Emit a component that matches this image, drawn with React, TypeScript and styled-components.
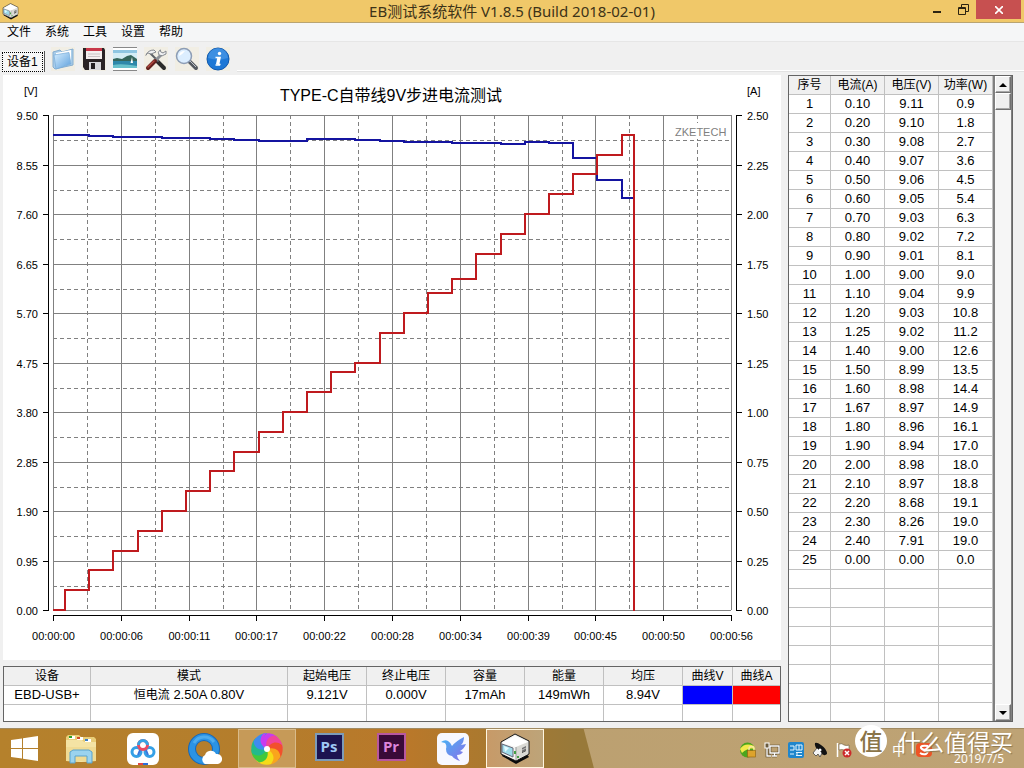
import React from 'react';
import styled, { createGlobalStyle, css } from 'styled-components';

const GlobalStyle = createGlobalStyle`
  *, *::before, *::after { box-sizing: border-box; }
  body {
    margin: 0;
    background: #f0f0f0;
    color: #000;
    font-family: "Liberation Sans", "Noto Sans CJK SC", sans-serif;
    font-size: 12px;
  }
  button { font: inherit; color: inherit; padding: 0; border: 0; background: none; }
`;

/* ---------- window frame ---------- */

const Window = styled.div`
  display: flex;
  flex-direction: column;
  min-height: 100vh;
`;

const TitleBar = styled.header`
  display: grid;
  grid-template-columns: 1fr auto 1fr;
  height: 23px;
  background: #f0c869;
  border-bottom: 1px solid #b9a471;
`;

const AppIcon = styled.span`
  padding: 3px 0 0 2px;
  line-height: 0;
`;

const WindowTitle = styled.h1`
  margin: 0;
  font: 400 15px/22px "Noto Sans", "Noto Sans CJK SC", sans-serif;
  color: #3d3318;
`;

const WindowControls = styled.div`
  display: flex;
  justify-content: flex-end;
  padding-right: 3px;
`;

const WindowButton = styled.button<{ $close?: boolean }>`
  display: flex;
  align-items: center;
  justify-content: center;
  width: ${(p) => (p.$close ? 45 : 26)}px;
  height: 19px;
  background: ${(p) => (p.$close ? '#c75050' : 'transparent')};
`;

const MenuBar = styled.nav`
  display: flex;
  gap: 14px;
  height: 19px;
  padding-left: 7px;
  background: #f5f6f7;
  border-bottom: 1px solid #e6e6e6;
`;

const MenuItem = styled.button`
  line-height: 18px;
`;

const Toolbar = styled.div`
  display: flex;
  align-items: flex-end;
  height: 33px;
  padding: 0 0 3px 2px;
`;

const DeviceTab = styled.button`
  height: 21px;
  padding: 0 1px 0 0;
  border-right: 1px solid #555;
  background: #f7f7f7;
`;

const TabFocus = styled.span`
  display: block;
  padding: 0 4px;
  border: 1px dotted #000;
  line-height: 18px;
  white-space: nowrap;
`;

const ToolGroup = styled.div`
  display: flex;
  gap: 7px;
  padding: 0 7px 1px 6px;
`;

const ToolButton = styled.button`
  width: 24px;
  height: 24px;
  line-height: 0;
  background: #f1eee4;
`;

const ToolbarEdge = styled.div`
  flex: 1;
  height: 2px;
  border-top: 1px solid #fff;
  border-bottom: 1px solid #e2e2e2;
`;

const Workspace = styled.main`
  display: grid;
  grid-template-columns: minmax(0, 1fr) 225px;
  gap: 7px;
  flex: 1;
  padding: 0 11px 6px 3px;
`;

const LeftColumn = styled.div`
  display: flex;
  flex-direction: column;
  gap: 6px;
`;

/* ---------- chart ---------- */

const ChartPanel = styled.section`
  background: #fff;
  line-height: 0;
`;

const ChartSvg = styled.svg`
  width: 100%;
  height: auto;
  font-family: "Liberation Sans", "Noto Sans CJK SC", sans-serif;
  font-size: 11px;
`;

const PLOT = { x: 50, y: 40, w: 678, h: 495 };
const V_MAX = 9.5;
const A_MAX = 2.5;
const STEP = 24.2;

const TIMES = ['00', '06', '11', '17', '22', '28', '34', '39', '45', '50', '56'].map((s) => `00:00:${s}`);

type Sample = [string, string, string];
const SAMPLES: Sample[] = [
  ['0.10', '9.11', '0.9'], ['0.20', '9.10', '1.8'], ['0.30', '9.08', '2.7'], ['0.40', '9.07', '3.6'],
  ['0.50', '9.06', '4.5'], ['0.60', '9.05', '5.4'], ['0.70', '9.03', '6.3'], ['0.80', '9.02', '7.2'],
  ['0.90', '9.01', '8.1'], ['1.00', '9.00', '9.0'], ['1.10', '9.04', '9.9'], ['1.20', '9.03', '10.8'],
  ['1.25', '9.02', '11.2'], ['1.40', '9.00', '12.6'], ['1.50', '8.99', '13.5'], ['1.60', '8.98', '14.4'],
  ['1.67', '8.97', '14.9'], ['1.80', '8.96', '16.1'], ['1.90', '8.94', '17.0'], ['2.00', '8.98', '18.0'],
  ['2.10', '8.97', '18.8'], ['2.20', '8.68', '19.1'], ['2.30', '8.26', '19.0'], ['2.40', '7.91', '19.0'],
  ['0.00', '0.00', '0.0'],
];
const EMPTY_ROWS = 8;

const yFor = (value: number, max: number) => Math.round(PLOT.y + PLOT.h * (1 - value / max));
const gx = (i: number) => Math.round(PLOT.x + (PLOT.w / 10) * i) + 0.5;
const gy = (i: number) => Math.round(PLOT.y + (PLOT.h / 10) * i) + 0.5;

function stepPath(start: number, values: number[], max: number) {
  let d = `M${PLOT.x} ${yFor(start, max)}`;
  values.forEach((v, i) => {
    d += `H${Math.round(PLOT.x + 12 + STEP * i)}V${yFor(v, max)}`;
  });
  return d + `H${PLOT.x + 581}`;
}

function Chart() {
  const steps = SAMPLES.slice(0, 24);
  const idx = Array.from({ length: 11 }, (_, i) => i);
  const right = PLOT.x + PLOT.w;
  const bottom = PLOT.y + PLOT.h;
  return (
    <ChartSvg viewBox="0 0 778 585" role="img" aria-label="TYPE-C自带线9V步进电流测试">
      <g stroke="#808080" fill="none">
        {idx.map((i) => (
          <path key={i} d={`M${gx(i)} ${PLOT.y}V${bottom}M${PLOT.x} ${gy(i)}H${right}`} />
        ))}
        {idx.slice(0, 10).map((i) => (
          <path
            key={i}
            strokeDasharray="4 3"
            d={`M${gx(i) + 34} ${PLOT.y}V${bottom}M${PLOT.x} ${gy(i) + 25}H${right}`}
          />
        ))}
      </g>
      <g stroke="#000" fill="none">
        <path d={`M45.5 ${PLOT.y}V${bottom + 1}M733.5 ${PLOT.y}V${bottom + 1}M50 540.5H729`} />
        {idx.map((i) => (
          <path key={i} d={`M40 ${gy(i)}H45M734 ${gy(i)}H739M${gx(i)} 541V546`} />
        ))}
      </g>
      <rect x="669" y="48" width="56" height="16" fill="#fff" />
      <text x="672" y="61" fill="#808080">ZKETECH</text>
      <text x="388" y="26" fontSize="16" textAnchor="middle">TYPE-C自带线9V步进电流测试</text>
      <text x="21" y="20">[V]</text>
      <text x="744" y="20">[A]</text>
      {idx.map((i) => (
        <g key={i}>
          <text x="35" y={gy(i) + 4} textAnchor="end">{(V_MAX - 0.95 * i).toFixed(2)}</text>
          <text x="744" y={gy(i) + 4}>{(A_MAX - 0.25 * i).toFixed(2)}</text>
          <text x={gx(i)} y="565" textAnchor="middle">{TIMES[i]}</text>
        </g>
      ))}
      <path d={stepPath(9.121, steps.map((s) => +s[1]), V_MAX)} fill="none" stroke="#1414a0" strokeWidth="2" />
      <path d={`${stepPath(0, steps.map((s) => +s[0]), A_MAX)}V${bottom + 1}`} fill="none" stroke="#bf1a1e" strokeWidth="2" />
    </ChartSvg>
  );
}

/* ---------- tables ---------- */

const frame = css`
  border: 1px solid #646464;
  background: #fff;
`;

const GridTable = styled.table`
  width: 100%;
  table-layout: fixed;
  border-spacing: 0;
  text-align: center;
  font-size: 13px;
`;

const Col = styled.col<{ $w: number }>`
  width: ${(p) => p.$w}px;
`;

const cell = css`
  height: 19px;
  padding: 0;
  border-right: 1px solid #c0c0c0;
  border-bottom: 1px solid #c0c0c0;
  line-height: 18px;
  white-space: nowrap;
  overflow: hidden;
`;

const HeadCell = styled.th`
  ${cell}
  background: #f0f0f0;
  font-size: 12px;
  font-weight: 400;
`;

const Cell = styled.td<{ $fill?: string }>`
  ${cell}
  background: ${(p) => p.$fill ?? '#fff'};
`;

const CjkText = styled.span`
  font-size: 12px;
`;

const SummaryPanel = styled.section`
  ${frame}
  height: 56px;
  overflow: hidden;

  th:last-child, td:last-child { border-right: 0; }
  tr:last-child td { border-bottom: 0; height: 16px; }
`;

const DataPanel = styled.section`
  ${frame}
  display: grid;
  grid-template-columns: 1fr 19px;
  align-items: stretch;

  tr:last-child td { border-bottom: 0; height: 18px; }
`;

const ScrollBar = styled.div`
  display: flex;
  flex-direction: column;
  border-left: 2px solid #808080;
  border-right: 1px solid #808080;
  background: #f6f6f6;
`;

const bevel = css`
  border: 1px solid;
  border-color: #fff #707070 #707070 #fff;
  box-shadow: inset -1px -1px 0 #a8a8a8;
  background: #f0f0f0;
`;

const ScrollButton = styled.button`
  ${bevel}
  display: flex;
  align-items: center;
  justify-content: center;
  height: 17px;
`;

const ScrollThumb = styled.div`
  ${bevel}
  height: 17px;
  margin-bottom: auto;
`;

const SUMMARY: { title: string; width: number; value?: React.ReactNode; fill?: string }[] = [
  { title: '设备', width: 87, value: 'EBD-USB+' },
  { title: '模式', width: 197, value: <><CjkText>恒电流</CjkText> 2.50A 0.80V</> },
  { title: '起始电压', width: 79, value: '9.121V' },
  { title: '终止电压', width: 79, value: '0.000V' },
  { title: '容量', width: 79, value: '17mAh' },
  { title: '能量', width: 79, value: '149mWh' },
  { title: '均压', width: 79, value: '8.94V' },
  { title: '曲线V', width: 50, fill: '#0000ff' },
  { title: '曲线A', width: 47, fill: '#ff0000' },
];

function SummaryTable() {
  return (
    <SummaryPanel>
      <GridTable>
        <colgroup>{SUMMARY.map((c) => <Col key={c.title} $w={c.width} />)}</colgroup>
        <thead>
          <tr>{SUMMARY.map((c) => <HeadCell key={c.title} scope="col">{c.title}</HeadCell>)}</tr>
        </thead>
        <tbody>
          <tr>{SUMMARY.map((c) => <Cell key={c.title} $fill={c.fill}>{c.value}</Cell>)}</tr>
          <tr>{SUMMARY.map((c) => <Cell key={c.title} />)}</tr>
        </tbody>
      </GridTable>
    </SummaryPanel>
  );
}

function DataTable() {
  return (
    <DataPanel>
      <GridTable>
        <colgroup><Col $w={42} /><Col $w={54} /><Col $w={54} /><Col $w={54} /></colgroup>
        <thead>
          <tr>{['序号', '电流(A)', '电压(V)', '功率(W)'].map((h) => <HeadCell key={h} scope="col">{h}</HeadCell>)}</tr>
        </thead>
        <tbody>
          {SAMPLES.map((s, i) => (
            <tr key={i}>
              <Cell>{i + 1}</Cell>
              {s.map((v, j) => <Cell key={j}>{v}</Cell>)}
            </tr>
          ))}
          {Array.from({ length: EMPTY_ROWS }, (_, i) => (
            <tr key={i}><Cell /><Cell /><Cell /><Cell /></tr>
          ))}
        </tbody>
      </GridTable>
      <ScrollBar>
        <ScrollButton aria-label="向上">
          <svg width="8" height="4"><path d="M4 0L8 4H0Z" /></svg>
        </ScrollButton>
        <ScrollThumb />
        <ScrollButton aria-label="向下">
          <svg width="8" height="4"><path d="M4 4L8 0H0Z" /></svg>
        </ScrollButton>
      </ScrollBar>
    </DataPanel>
  );
}

/* ---------- taskbar ---------- */

const Taskbar = styled.footer`
  position: relative;
  display: flex;
  height: 40px;
  background: linear-gradient(to right, #b5812c 0%, #b47d2c 26%, #b9782a 40%, #a9792f 48%, #98793a 56%, #98793a 60%);
  border-top: 1px solid #a08a62;

  &::before {
    content: "";
    position: absolute;
    inset: 0;
    background: linear-gradient(to right, #b99d6b, #bea375);
    clip-path: polygon(57% 0, 100% 0, 100% 100%, 58% 100%);
  }
`;

const TaskList = styled.div`
  position: relative;
  display: flex;
  gap: 4px;
  margin-right: auto;
`;

const TaskButton = styled.button<{ $state?: 'open' | 'active' }>`
  display: flex;
  align-items: center;
  justify-content: center;
  width: 58px;
  height: 39px;
  border: 1px solid transparent;
  ${(p) => p.$state === 'open' && css`
    border-color: #d9bb8a;
    background: #c69a58;
  `}
  ${(p) => p.$state === 'active' && css`
    border-color: #fff6e0;
    background: linear-gradient(to right, #c79a68, #bda479);
  `}
`;

const StartButton = styled(TaskButton)`
  width: 48px;
`;

const AdobeTile = styled.span<{ $edge: string; $back: string; $ink: string }>`
  width: 29px;
  height: 28px;
  margin-bottom: 4px;
  border: 2px solid ${(p) => p.$edge};
  background: ${(p) => p.$back};
  color: ${(p) => p.$ink};
  font: 700 15px/23px "Open Sans", sans-serif;
`;

const Tray = styled.div`
  position: relative;
  display: flex;
  align-items: center;
  gap: 8px;
  padding: 3px 20px 0 0;
  color: #fff;
`;

const ImeMode = styled.span`
  width: 16px;
  margin-left: 32px;
  font-size: 14px;
  line-height: 16px;
`;

const TrayDate = styled.time`
  align-self: flex-end;
  margin-left: 14px;
  font: 12px/18px "Open Sans", sans-serif;
`;

const Watermark = styled.div`
  position: absolute;
  right: 11px;
  bottom: 11px;
  display: flex;
  align-items: center;
  gap: 11px;
  color: #fff;
  font: 23px/30px "Noto Sans CJK SC", sans-serif;
  white-space: nowrap;
  text-shadow: 1px 1px 1px #8d774f;
`;

const WatermarkBadge = styled.span`
  width: 32px;
  height: 32px;
  border-radius: 50%;
  background: #fff;
  color: #8a7448;
  font: 500 23px/30px "Noto Sans CJK SC", sans-serif;
  text-align: center;
  text-shadow: none;
`;

/* ---------- icons ---------- */

const CubeIcon = ({ size }: { size: number }) => (
  <svg width={size} height={size} viewBox="0 0 32 32">
    <path d="M3 23L17 31L30 24L27 20L5 19Z" fill="#0a0a0a" />
    <path d="M2 9L16 1L30 8V21L17 28L2 21Z" fill="#f4f4f0" stroke="#161616" strokeWidth="1" />
    <path d="M3 10L16 3L29 9L17 14Z" fill="#fff" />
    <path d="M17 14L29 9V21L17 27Z" fill="#d9d9d4" />
    <path d="M3 11L14 15V24L3 19Z" fill="#9fdcea" stroke="#667" />
    <path d="M5 13L10 15L6 19Z" fill="#e4fbff" />
    <path d="M17 14V27" stroke="#999" />
    <path d="M16 18v3M19 23v2" stroke="#44a044" strokeWidth="2" />
    <path d="M23 15l4-2v5l-4 2z" fill="#333" />
    <path d="M24 14v5M26 13v5M23 17l4-2" stroke="#ddd" strokeWidth=".7" />
  </svg>
);

const FolderIcon = () => (
  <svg width="24" height="24" viewBox="0 0 24 24">
    <defs><linearGradient id="fold" x1="0" y1="0" x2="1" y2="1"><stop offset="0" stopColor="#d8efff" /><stop offset="1" stopColor="#5c9fdc" /></linearGradient></defs>
    <path d="M2 5L9 3L11 5L22 2V18L4 22L2 20Z" fill="#a9cdea" stroke="#86aed0" />
    <path d="M5 6L20 3V17L5 21Z" fill="#fff" />
    <path d="M3 8L18 5.500L20 17L5 22Z" fill="url(#fold)" stroke="#78acd8" strokeWidth=".7" />
  </svg>
);

const FloppyIcon = () => (
  <svg width="24" height="24" viewBox="0 0 24 24">
    <path d="M1 1H22L23 3V23H3L1 20Z" fill="#292326" />
    <path d="M4 1H20V12H4Z" fill="#f4efef" />
    <path d="M4 1H20V4H4Z" fill="#c8384a" />
    <path d="M6 7H18M6 9.500H18" stroke="#c9c3c6" />
    <path d="M7 15H19V23H7Z" fill="#d9d9de" />
    <path d="M9 16H13V22H9Z" fill="#221e22" />
  </svg>
);

const PictureIcon = () => (
  <svg width="24" height="24" viewBox="0 0 24 24">
    <path d="M0 0H24V24H0Z" fill="#fff" />
    <path d="M0 3H24V14H0Z" fill="#d3edf6" />
    <path d="M0 3H24V6H0Z" fill="#8fc6e2" />
    <path d="M0 12L4 11L9 12L14 9L18 8L24 12V15H0Z" fill="#35665c" />
    <path d="M0 14H24V20H0Z" fill="#2e87aa" />
    <path d="M0 18Q8 16 24 19V21H0Z" fill="#68c0cb" />
    <path d="M19 10L17.500 16H20Z" fill="#fff" />
    <path d="M0 .5H24M0 23.500H24" stroke="#888" />
  </svg>
);

const ToolsIcon = () => (
  <svg width="24" height="24" viewBox="0 0 24 24" fill="none" strokeLinecap="round">
    <path d="M13 14L20 21" stroke="#2c2c2c" strokeWidth="4" />
    <path d="M6 6L14 14" stroke="#5c6066" strokeWidth="2" />
    <path d="M2 8Q4 3 10 3L12 5L7 7L4 6Z" fill="#f0f1f3" stroke="#85898f" />
    <path d="M18 7L12 13" stroke="#8c9096" strokeWidth="3" />
    <path d="M16 3Q13 5 15 8Q18 10 22 7V4L19 6L17 5Z" fill="#f0f1f3" stroke="#85898f" />
    <path d="M11 14L4 21" stroke="#63211e" strokeWidth="4" />
    <path d="M10 14L4 20" stroke="#b34841" strokeWidth="1.5" />
  </svg>
);

const MagnifierIcon = () => (
  <svg width="24" height="24" viewBox="0 0 24 24" fill="none">
    <path d="M14 14L21 21" stroke="#555a60" strokeWidth="4" strokeLinecap="round" />
    <path d="M14 13L21 20" stroke="#c0c4ca" strokeWidth="1" />
    <circle cx="9" cy="9" r="7.500" fill="#dceeff" stroke="#8d9db5" strokeWidth="1.500" />
    <path d="M4 9Q4 4 10 4Q7 8 4 9Z" fill="#fff" />
  </svg>
);

const InfoIcon = () => (
  <svg width="24" height="24" viewBox="0 0 24 24">
    <circle cx="12" cy="12" r="11" fill="#1e78d6" stroke="#1259ad" />
    <path d="M2 11A10 10 0 0 1 22 11Q12 14 2 11Z" fill="#5ba6ee" opacity=".5" />
    <circle cx="13.500" cy="6.500" r="1.700" fill="#fff" />
    <path d="M9.500 10.500H14L12.500 17.500H14.500M9.500 18H14" stroke="#fff" strokeWidth="1.600" fill="none" />
    <path d="M12.500 11L11.200 17.500" stroke="#fff" strokeWidth="2.500" />
  </svg>
);

const WindowsIcon = () => (
  <svg width="27" height="26" viewBox="0 0 27 26">
    <path d="M0 4L11 2.500V12H0ZM12 2.300L27 0V12H12ZM0 13H11V22.500L0 21ZM12 13H27V25L12 22.800Z" fill="#fff" />
  </svg>
);

const ExplorerIcon = () => (
  <svg width="32" height="30" viewBox="0 0 32 30">
    <path d="M1 3L3 1H14L16 3H29L31 5V27H1Z" fill="#e9cd78" />
    <path d="M4 2H10V5H4Z" fill="#fff" /><path d="M4 2H7V4H4Z" fill="#2ba02b" />
    <path d="M12 3H18V6H12Z" fill="#fff" /><path d="M12 3H15V5H12Z" fill="#d24b2a" />
    <path d="M20 5H26V8H20Z" fill="#fff" /><path d="M20 5H23V7H20Z" fill="#3b7fc4" />
    <path d="M1 6H17L19 8H31V27Q16 29 1 27Z" fill="#f4e3a4" />
    <path d="M1 13H31V27H1Z" fill="#ecd58a" opacity=".6" />
    <path d="M5 29V18L8 16H24L27 18V29H22V22H10V29Z" fill="#9bd3ee" stroke="#5aa3cc" />
  </svg>
);

const CloudRingsIcon = () => (
  <svg width="32" height="32" viewBox="0 0 32 32" fill="none">
    <rect width="32" height="32" rx="6" fill="#fff" />
    <circle cx="9.500" cy="19" r="4.500" stroke="#35a0e6" strokeWidth="3" />
    <circle cx="22.500" cy="19" r="4.500" stroke="#35a0e6" strokeWidth="3" />
    <path d="M13 17L11 22M19 17L21 22" stroke="#3a76dc" strokeWidth="2" />
    <circle cx="16" cy="12" r="4.500" stroke="#e94c62" strokeWidth="3" />
    <path d="M11.500 12A4.500 4.500 0 0 1 20.500 12" stroke="#36a4e4" strokeWidth="3" />
    <path d="M11 31H16" stroke="#e04646" strokeWidth="2" /><path d="M16 31H21" stroke="#2e6ed8" strokeWidth="2" />
  </svg>
);

const CloudBrowserIcon = () => (
  <svg width="34" height="32" viewBox="0 0 34 32">
    <circle cx="16" cy="16" r="12" fill="none" stroke="#1768b8" strokeWidth="8" />
    <circle cx="16" cy="16" r="12" fill="none" stroke="#2b93e4" strokeWidth="6" />
    <path d="M6 10A12 12 0 0 1 26 9" fill="none" stroke="#4dabec" strokeWidth="3" />
    <path d="M17 31A5 5 0 0 1 17 22A6 6 0 0 1 28 21A5 5 0 0 1 30 31Z" fill="#fff" />
  </svg>
);

const PETALS = ['#c73cf0', '#f0459a', '#f2502c', '#f9a51c', '#f5dc18', '#42c83c', '#23b98c', '#3e8bf0'];
const ColorWheelIcon = () => (
  <svg width="34" height="34" viewBox="-17 -17 34 34">
    {PETALS.map((c, i) => (
      <path key={c} d="M0 0C-6 -3 -9 -9 -4 -15C3 -17 9 -14 11 -11C4 -12 -1 -8 0 0Z" fill={c} transform={`rotate(${i * 45})`} />
    ))}
    <path d="M0 0C-6 -3 -9 -9 -4 -15L-1 -16C-5 -9 -3 -4 0 0Z" fill="#c73cf0" />
    <circle r="3" fill="#fff" />
  </svg>
);

const BirdIcon = () => (
  <svg width="32" height="32" viewBox="0 0 32 32">
    <defs><linearGradient id="bird" x1="0" y1="0" x2="1" y2="1"><stop offset="0" stopColor="#45b5f4" /><stop offset="1" stopColor="#8a6ee8" /></linearGradient></defs>
    <rect width="32" height="32" rx="5" fill="#f7f8ff" />
    <path d="M4 9Q8 6 11 8Q14 10 15 13Q19 8 27 4Q27 9 24 12L29 11Q27 16 23 18L26 19Q24 22 20 22Q20 25 23 28Q17 26 15 23Q9 22 9 16Q10 12 8 10Z" fill="url(#bird)" />
  </svg>
);

const LockIcon = () => (
  <svg width="16" height="16" viewBox="0 0 16 16">
    <circle cx="7.500" cy="8" r="7.500" fill="#4aa51e" />
    <path d="M0 7Q5 0 14 4L15 7Q8 5 2 11Z" fill="#f2ea4a" />
    <path d="M9 9V7A2.500 2.500 0 0 1 14 7V9" fill="none" stroke="#f7e7a0" strokeWidth="1.500" />
    <rect x="7.500" y="8.500" width="8" height="6.500" fill="#dda32c" stroke="#8a5f10" strokeWidth=".6" />
  </svg>
);

const NetworkIcon = () => (
  <svg width="16" height="16" viewBox="0 0 16 16" fill="none">
    <path d="M6 4H15V11H6ZM8 14H13M10.500 11V14M3 5V14H7" stroke="#4c3c20" strokeWidth="2.600" />
    <path d="M6 4H15V11H6ZM8 14H13M10.500 11V14M3 5V14H7" stroke="#fff" strokeWidth="1.400" />
    <rect x="1" y="1" width="4" height="5" fill="#6a5a3c" stroke="#fff" />
  </svg>
);

const BluePanelIcon = () => (
  <svg width="16" height="16" viewBox="0 0 16 16" fill="none">
    <rect width="16" height="16" rx="2" fill="#1f86cc" />
    <path d="M2 4H6V8H2M2 12H6M8 3H14V8H8ZM11 3V8M8 10.500H14M8 13.500H14M9 10V14" stroke="#e4f5ff" />
  </svg>
);

const SatelliteIcon = () => (
  <svg width="16" height="16" viewBox="0 0 16 16">
    <path d="M3 1Q2 4 7 10Q12 15 15 12Q15 7 9 3Q5 0 3 1Z" fill="#111" />
    <path d="M1 11L5 6L10 11L8 15L6 12L4 14Z" fill="#f4f4f4" stroke="#333" strokeWidth=".7" />
    <circle cx="8" cy="8" r="1.500" fill="#fff" />
  </svg>
);

const FlagIcon = () => (
  <svg width="16" height="16" viewBox="0 0 16 16">
    <path d="M1.500 1V15" stroke="#fff" strokeWidth="1.500" />
    <path d="M3 2Q6 1 8 3Q11 4 13 3V9Q10 10 8 8Q6 7 3 8Z" fill="#fff" stroke="#66553a" strokeWidth=".6" />
    <circle cx="11" cy="11" r="4.500" fill="#cc2a2a" />
    <path d="M9 9L13 13M13 9L9 13" stroke="#fff" strokeWidth="1.500" />
  </svg>
);

const SwirlIcon = () => (
  <svg width="16" height="16" viewBox="0 0 16 16">
    <rect y="1" width="16" height="14" rx="4" fill="#ee5426" />
    <path d="M12 4Q4 3 5 6Q6 8 10 8Q13 10 10 12Q7 13 4 11" fill="none" stroke="#fff" strokeWidth="2" />
  </svg>
);

const TOOLS = [
  { label: '打开', icon: <FolderIcon /> },
  { label: '保存', icon: <FloppyIcon /> },
  { label: '图片', icon: <PictureIcon /> },
  { label: '工具', icon: <ToolsIcon /> },
  { label: '查找', icon: <MagnifierIcon /> },
  { label: '关于', icon: <InfoIcon /> },
];

export default function App() {
  return (
    <Window>
      <GlobalStyle />
      <TitleBar>
        <AppIcon><CubeIcon size={17} /></AppIcon>
        <WindowTitle>EB测试系统软件 V1.8.5 (Build 2018-02-01)</WindowTitle>
        <WindowControls>
          <WindowButton aria-label="最小化">
            <svg width="8" height="8"><path d="M0 6H8" stroke="#2c2412" strokeWidth="2" /></svg>
          </WindowButton>
          <WindowButton aria-label="还原">
            <svg width="11" height="11" fill="none" stroke="#2c2412"><path d="M.5 3.500H7.500V10.500H.5ZM.5 4.500H7.500M3.500 3V.5H10.500V7.500H8" /></svg>
          </WindowButton>
          <WindowButton $close aria-label="关闭">
            <svg width="8" height="8"><path d="M0 0L8 8M8 0L0 8" stroke="#fff" strokeWidth="1.600" /></svg>
          </WindowButton>
        </WindowControls>
      </TitleBar>
      <MenuBar>
        {['文件', '系统', '工具', '设置', '帮助'].map((m) => <MenuItem key={m}>{m}</MenuItem>)}
      </MenuBar>
      <Toolbar>
        <DeviceTab><TabFocus>设备1</TabFocus></DeviceTab>
        <ToolGroup>
          {TOOLS.map((t) => <ToolButton key={t.label} aria-label={t.label}>{t.icon}</ToolButton>)}
        </ToolGroup>
        <ToolbarEdge />
      </Toolbar>
      <Workspace>
        <LeftColumn>
          <ChartPanel><Chart /></ChartPanel>
          <SummaryTable />
        </LeftColumn>
        <DataTable />
      </Workspace>
      <Taskbar>
        <TaskList>
          <StartButton aria-label="开始"><WindowsIcon /></StartButton>
          <TaskButton aria-label="资源管理器"><ExplorerIcon /></TaskButton>
          <TaskButton aria-label="网盘"><CloudRingsIcon /></TaskButton>
          <TaskButton aria-label="浏览器"><CloudBrowserIcon /></TaskButton>
          <TaskButton $state="open" aria-label="极速浏览器"><ColorWheelIcon /></TaskButton>
          <TaskButton><AdobeTile $edge="#7d9bb8" $back="#1c1450" $ink="#9fc8f4">Ps</AdobeTile></TaskButton>
          <TaskButton><AdobeTile $edge="#b858a0" $back="#3a0a38" $ink="#dd84dc">Pr</AdobeTile></TaskButton>
          <TaskButton aria-label="迅雷"><BirdIcon /></TaskButton>
          <TaskButton $state="active" aria-label="EB测试系统软件"><CubeIcon size={32} /></TaskButton>
        </TaskList>
        <Tray>
          <LockIcon />
          <NetworkIcon />
          <BluePanelIcon />
          <SatelliteIcon />
          <FlagIcon />
          <ImeMode>中</ImeMode>
          <SwirlIcon />
          <TrayDate>2019/7/5</TrayDate>
        </Tray>
        <Watermark>
          <WatermarkBadge>值</WatermarkBadge>
          什么值得买
        </Watermark>
      </Taskbar>
    </Window>
  );
}
